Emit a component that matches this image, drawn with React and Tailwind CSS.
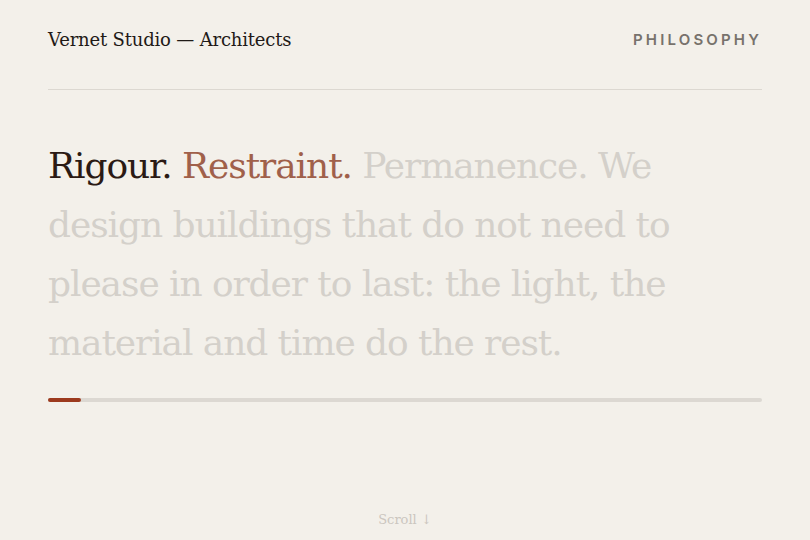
import React from 'react';

const serif = { fontFamily: '"DejaVu Serif", Georgia, serif' };

export default function App() {
  return (
    <div className="min-h-screen w-full bg-[#f3f0ea] flex flex-col px-12" style={serif}>
      {/* Top bar */}
      <header className="flex items-start justify-between pt-[26px] h-[90px] border-b border-[#dcd8d1]">
        <span className="text-[18px] text-[#1f1a17] tracking-[-0.01em]">Vernet Studio — Architects</span>
        <span
          className="text-[15px] font-semibold tracking-[0.21em] text-[#77726c] mt-[3px]"
          style={{ fontFamily: 'Inter, "Liberation Sans", sans-serif' }}
        >
          PHILOSOPHY
        </span>
      </header>

      {/* Statement */}
      <main className="flex-1 flex flex-col pt-[46px]">
        <p className="text-[36px] leading-[59px] tracking-[-0.03em] text-[#d4d0ca]">
          <span className="text-[#2b1a14]">Rigour.</span>{' '}
          <span className="text-[#a0604a]">Restraint.</span> Permanence. We
          <br />
          design buildings that do not need to
          <br />
          please in order to last: the light, the
          <br />
          material and time do the rest.
        </p>

        <div className="mt-[26px] h-[4px] rounded-full bg-[#dcd8d2] flex">
          <div className="w-[33px] h-full rounded-full bg-[#9c3a1e]" />
        </div>
      </main>

      <footer className="flex justify-center pb-[11px]">
        <span className="text-[13px] text-[#cbc6bf]">Scroll ↓</span>
      </footer>
    </div>
  );
}
